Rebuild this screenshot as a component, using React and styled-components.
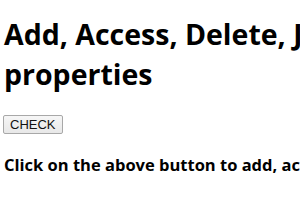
import React from 'react';
import styled, { createGlobalStyle } from 'styled-components';

const GlobalStyle = createGlobalStyle`
  body {
    margin: 0;
    padding: 0 4px;
    background: #ffffff;
    font-family: "Open Sans", "Noto Sans", sans-serif;
    color: #000;
    overflow: hidden;
  }
`;

const Page = styled.div`
  width: 600px;
`;

const Title = styled.h1`
  font-size: 28.5px;
  font-weight: 700;
  line-height: 40px;
  margin: 14px 0 21px;
  width: 560px;
`;

const CheckButton = styled.button`
  display: block;
  margin-left: -1px;
  font-family: "Liberation Sans", Arial, sans-serif;
  font-size: 13px;
  line-height: 15px;
  padding: 1px 6px;
  background: linear-gradient(#f6f6f6, #e8e8e8);
  border: 1px solid #a8a8a8;
  border-radius: 2px;
  color: #111;
`;

const Result = styled.p`
  font-size: 16.5px;
  font-weight: 700;
  margin: 19px 0 0;
  white-space: nowrap;
`;

function App() {
  return (
    <Page>
      <GlobalStyle />
      <Title>Add, Access, Delete, JavaScript object properties</Title>
      <CheckButton>CHECK</CheckButton>
      <Result>Click on the above button to add, access and delete the properties</Result>
    </Page>
  );
}

export default App;
